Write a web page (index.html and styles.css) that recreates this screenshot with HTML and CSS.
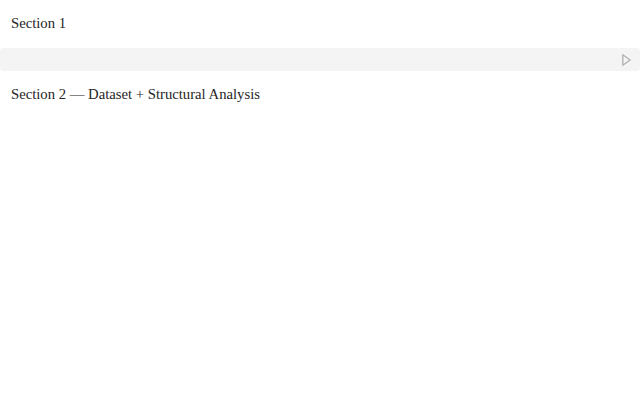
FILE: index.html
```html
<!DOCTYPE html>
<html>
<head>
<meta charset="utf-8">
<link rel="stylesheet" href="styles.css">
</head>
<body>
<div class="page">
  <div class="section-title">Section 1</div>
  <div class="cell">
    <svg class="run" width="11" height="14" viewBox="0 0 11 14"><path d="M1.8 1.8 L9.2 7 L1.8 12.2 Z" fill="none" stroke="#b3b3b3" stroke-width="1.4" stroke-linejoin="round"/></svg>
  </div>
  <div class="section-title">Section 2 — Dataset + Structural Analysis</div>
</div>
</body>
</html>
```

FILE: styles.css
```css
html, body { margin: 0; padding: 0; background: #ffffff; }
.page { display: flex; flex-direction: column; }
.section-title {
  font-family: "Liberation Serif", "DejaVu Serif", serif;
  font-size: 14.7px;
  color: #262626;
  padding: 13px 11px 0;
  height: 35px;
  box-sizing: border-box;
  line-height: 20px;
}
.cell {
  margin-top: 13px;
  height: 23px;
  background: #f4f4f4;
  border-radius: 4px;
  display: flex;
  align-items: center;
  justify-content: flex-end;
  padding-right: 8px;
}
.run { display: block; }
```
